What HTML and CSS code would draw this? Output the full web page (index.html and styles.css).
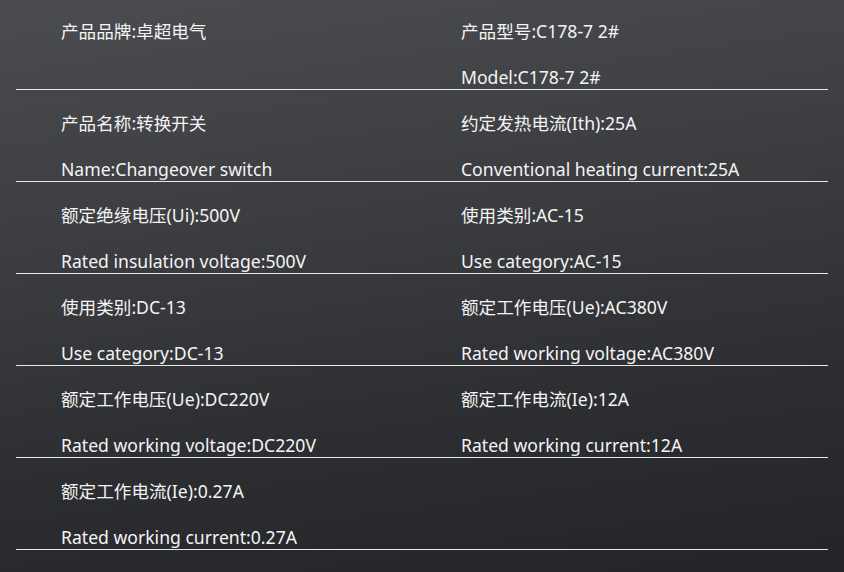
FILE: index.html
```html
<!DOCTYPE html>
<html lang="zh-CN">
<head>
    <meta charset="UTF-8">
    <meta name="viewport" content="width=device-width, initial-scale=1.0">
    <title>产品参数 - 转换开关</title>
    <link rel="stylesheet" href="styles.css">
</head>
<body>

    <div class="spec-table">
        <div class="spec-row">
            <div class="spec-cell">
                <p class="cn">产品品牌:卓超电气</p>
                <p class="en"></p>
            </div>
            <div class="spec-cell">
                <p class="cn">产品型号:C178-7 2#</p>
                <p class="en">Model:C178-7 2#</p>
            </div>
        </div>

        <div class="spec-row">
            <div class="spec-cell">
                <p class="cn">产品名称:转换开关</p>
                <p class="en">Name:Changeover switch</p>
            </div>
            <div class="spec-cell">
                <p class="cn">约定发热电流(Ith):25A</p>
                <p class="en">Conventional heating current:25A</p>
            </div>
        </div>

        <div class="spec-row">
            <div class="spec-cell">
                <p class="cn">额定绝缘电压(Ui):500V</p>
                <p class="en">Rated insulation voltage:500V</p>
            </div>
            <div class="spec-cell">
                <p class="cn">使用类别:AC-15</p>
                <p class="en">Use category:AC-15</p>
            </div>
        </div>

        <div class="spec-row">
            <div class="spec-cell">
                <p class="cn">使用类别:DC-13</p>
                <p class="en">Use category:DC-13</p>
            </div>
            <div class="spec-cell">
                <p class="cn">额定工作电压(Ue):AC380V</p>
                <p class="en">Rated working voltage:AC380V</p>
            </div>
        </div>

        <div class="spec-row">
            <div class="spec-cell">
                <p class="cn">额定工作电压(Ue):DC220V</p>
                <p class="en">Rated working voltage:DC220V</p>
            </div>
            <div class="spec-cell">
                <p class="cn">额定工作电流(Ie):12A</p>
                <p class="en">Rated working current:12A</p>
            </div>
        </div>

        <div class="spec-row">
            <div class="spec-cell">
                <p class="cn">额定工作电流(Ie):0.27A</p>
                <p class="en">Rated working current:0.27A</p>
            </div>
            <div class="spec-cell"></div>
        </div>
    </div>

</body>
</html>
```

FILE: styles.css
```css
html, body {
    height: 100%;
}

body {
    margin: 0;
    padding: 0;
    font-family: "Noto Sans", "Noto Sans CJK SC", sans-serif;
    color: #f4f4f4;
    background: linear-gradient(172deg, #4b4c50 0%, #3d3e42 35%, #2d2e32 70%, #232428 100%);
    overflow: hidden;
}

.spec-table {
    width: 812px;
    margin: -2px 0 0 16px;
}

.spec-row {
    display: grid;
    grid-template-columns: 400px 1fr;
    padding: 21px 0 0 45px;
    border-bottom: 1px solid #e8e8e8;
}

.spec-cell {
    display: flex;
    flex-direction: column;
    gap: 22px;
}

.spec-cell p {
    margin: 0;
    height: 24px;
    line-height: 24px;
    font-size: 17.6px;
    white-space: nowrap;
}
```
